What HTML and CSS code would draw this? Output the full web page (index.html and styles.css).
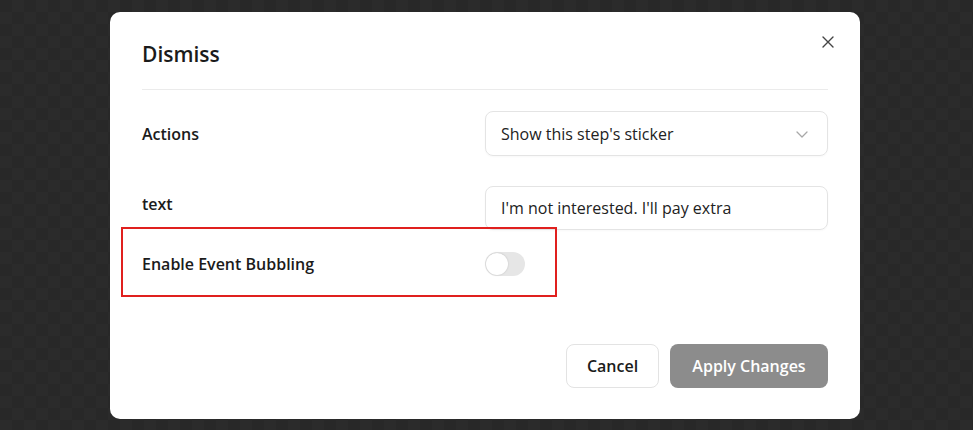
FILE: index.html
```html
<!DOCTYPE html>
<html>
<head>
<meta charset="utf-8">
<link rel="stylesheet" href="styles.css">
</head>
<body>
<div class="backdrop">
  <div class="modal">
    <div class="header">
      <h2 class="title">Dismiss</h2>
      <button class="close" aria-label="Close">
        <svg width="12" height="12" viewBox="0 0 12 12"><path d="M1 1 L11 11 M11 1 L1 11" stroke="#444" stroke-width="1.4" fill="none" stroke-linecap="round"/></svg>
      </button>
    </div>
    <div class="body">
      <div class="row row-select">
        <label class="label">Actions</label>
        <div class="select">
          <span>Show this step's sticker</span>
          <svg class="chev" width="12" height="7" viewBox="0 0 12 7"><path d="M1 1 L6 6 L11 1" stroke="#a8a8a8" stroke-width="1.3" fill="none" stroke-linecap="round" stroke-linejoin="round"/></svg>
        </div>
      </div>
      <div class="row row-input">
        <label class="label label-top">text</label>
        <div class="input">I'm not interested. I'll pay extra</div>
      </div>
      <div class="row row-toggle">
        <label class="label">Enable Event Bubbling</label>
        <div class="toggle-cell"><span class="toggle"><span class="knob"></span></span></div>
        <span class="highlight"></span>
      </div>
    </div>
    <div class="footer">
      <button class="btn btn-cancel">Cancel</button>
      <button class="btn btn-apply">Apply Changes</button>
    </div>
  </div>
</div>
</body>
</html>
```
FILE: styles.css
```css
* { box-sizing: border-box; }
html, body { margin: 0; padding: 0; }
body {
  width: 973px;
  height: 430px;
  overflow: hidden;
  background-color: #292929;
  background-image: repeating-conic-gradient(#2b2b2b 0 25%, #282828 0 50%);
  background-size: 24px 24px;
  font-family: "Open Sans", "Noto Sans", sans-serif;
  color: #1b1b1b;
}
.backdrop {
  padding: 12px 0 0 110px;
}
.modal {
  width: 750px;
  height: 407px;
  background: #fff;
  border-radius: 10px;
  padding: 28px 32px 31px 32px;
}
.header {
  display: flex;
  align-items: center;
  justify-content: space-between;
  padding-bottom: 21px;
  border-bottom: 1px solid #ebebeb;
}
.title {
  margin: 0;
  font-size: 21px;
  line-height: 28px;
  font-weight: 600;
}
.close {
  border: 0;
  background: none;
  padding: 0;
  margin: -24px -6px 0 0;
  width: 12px;
  height: 12px;
  display: flex;
}
.body {
  padding-top: 21px;
}
.row {
  display: grid;
  grid-template-columns: 1fr 1fr;
  align-items: center;
  position: relative;
}
.row-input { margin-top: 30px; align-items: start; }
.row-toggle { margin-top: 22px; }
.label {
  font-size: 16px;
  font-weight: 600;
  line-height: 24px;
}
.label-top { padding-top: 6px; }
.select, .input {
  height: 45px;
  border: 1px solid #e4e4e4;
  border-radius: 8px;
  padding: 0 19px 0 15px;
  font-size: 16px;
  display: flex;
  align-items: center;
  color: #222;
  box-shadow: 0 1px 2px rgba(0,0,0,0.03);
}
.input { height: 44px; }
.select { justify-content: space-between; }
.chev { margin-top: 1px; }
.toggle-cell { display: flex; }
.toggle {
  width: 40px;
  height: 24px;
  border-radius: 12px;
  background: #e6e6e6;
  display: flex;
  align-items: center;
  padding: 0 1px;
}
.knob {
  width: 22px;
  height: 22px;
  border-radius: 50%;
  background: #fff;
  box-shadow: 0 0 2px rgba(0,0,0,0.18);
}
.highlight {
  position: absolute;
  left: -21px;
  top: -25px;
  width: 436px;
  height: 70px;
  border: 2px solid #e0201e;
  pointer-events: none;
}
.footer {
  margin-top: 68px;
  display: flex;
  justify-content: flex-end;
  gap: 11px;
}
.btn {
  height: 44px;
  border-radius: 8px;
  font-family: inherit;
  font-size: 16px;
  font-weight: 600;
  padding: 0;
}
.btn-cancel {
  width: 93px;
  background: #fff;
  border: 1px solid #e3e3e3;
  color: #1b1b1b;
}
.btn-apply {
  width: 158px;
  background: #8c8c8c;
  border: 0;
  color: #fff;
}
```
